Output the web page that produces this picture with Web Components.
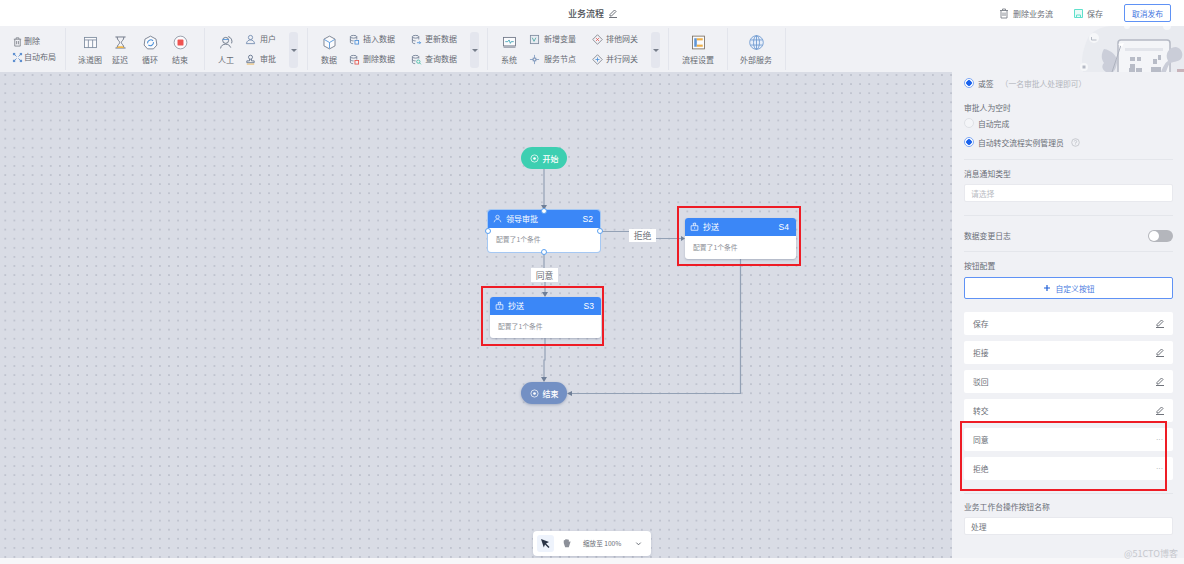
<!DOCTYPE html>
<html lang="zh"><head><meta charset="utf-8"><style>
html,body{margin:0;height:100%;overflow:hidden;background:#f7f7f9}
body{font-family:"Noto Sans CJK SC","Liberation Sans",sans-serif;font-size:8px;color:#62666e}
</style></head><body>
<wf-app></wf-app>
<script>
const ICONS={
trash:'<path d="M2 3.5h8M4.5 3.5V2h3v1.5M3 3.5V11h6V3.5M5 5.5V9M7 5.5V9" fill="none" stroke="#7c8088"/>',
layout:'<path d="M2 2l3 3M10 2L7 5M2 10l3-3M10 10L7 7" fill="none" stroke="#5e8fd0"/><rect x="1" y="1" width="2.5" height="2.5" fill="#5e8fd0"/><rect x="8.5" y="1" width="2.5" height="2.5" fill="#5e8fd0"/><rect x="1" y="8.5" width="2.5" height="2.5" fill="#5e8fd0"/><rect x="8.5" y="8.5" width="2.5" height="2.5" fill="#5e8fd0"/>',
user:'<circle cx="6" cy="3.8" r="2.3" fill="none" stroke="#6b85ad"/><path d="M1.5 10.5c.5-3 2.5-4 4.500-4s4 1 4.500 4z" fill="none" stroke="#6b85ad"/>',
stamp:'<circle cx="6" cy="3.5" r="2.200" fill="none" stroke="#5a6b85"/><path d="M5 5.500v2H2v2h8v-2H7v-2" fill="none" stroke="#5a6b85"/><path d="M2 11h8" stroke="#eeb048"/>',
dbadd:'<ellipse cx="5" cy="3" rx="3.5" ry="1.5" fill="none" stroke="#6b7a90"/><path d="M1.500 3v6c0 1 1.500 1.500 3 1.500M8.500 3v3M1.500 6c0 1 2 1.500 3.500 1.500" fill="none" stroke="#6b7a90"/><rect x="6.5" y="7" width="4" height="4" fill="none" stroke="#4a90d9"/>',
dbdel:'<ellipse cx="5" cy="3" rx="3.5" ry="1.5" fill="none" stroke="#6b7a90"/><path d="M1.500 3v6c0 1 1.500 1.500 3 1.500M8.500 3v3M1.500 6c0 1 2 1.500 3.500 1.500" fill="none" stroke="#6b7a90"/><rect x="6.5" y="7" width="4" height="4" fill="none" stroke="#e5534b"/>',
dbup:'<ellipse cx="5" cy="3" rx="3.5" ry="1.5" fill="none" stroke="#6b7a90"/><path d="M1.500 3v6c0 1 1.500 1.500 3 1.500M8.500 3v3M1.500 6c0 1 2 1.500 3.500 1.500" fill="none" stroke="#6b7a90"/><path d="M6.500 9.500h4M9 8l1.500 1.500L9 11" fill="none" stroke="#4a90d9"/>',
dbq:'<ellipse cx="5" cy="3" rx="3.5" ry="1.5" fill="none" stroke="#6b7a90"/><path d="M1.500 3v6c0 1 1.500 1.500 3 1.500M8.500 3v2M1.500 6c0 1 2 1.500 3.500 1.500" fill="none" stroke="#6b7a90"/><circle cx="8" cy="8.3" r="1.8" fill="none" stroke="#39b8a0"/><path d="M9.300 9.700l1.500 1.500" stroke="#39b8a0"/>',
vars:'<rect x="1.5" y="1.5" width="9" height="9" fill="#e8ebf1" stroke="#7c8a9e"/><path d="M3.500 4l2 4 2-4" fill="none" stroke="#46a6a0"/>',
svc:'<path d="M6 1v3.500M6 7.500V11M1 6h3.500M7.500 6H11" stroke="#7f9bc0"/><rect x="4.5" y="4.5" width="3" height="3" fill="none" stroke="#6b85ad"/>',
gwx:'<path d="M6 .8L11.200 6 6 11.200.8 6z" fill="none" stroke="#7c8088"/><path d="M4.500 4.500l3 3M7.500 4.500l-3 3" stroke="#e5534b"/>',
gwp:'<path d="M6 .8L11.200 6 6 11.200.8 6z" fill="none" stroke="#7c8088"/><path d="M6 3.800v4.400M3.800 6h4.400" stroke="#4a90d9"/>'
};
const BIG={
lane:'<rect x="3" y="4" width="14" height="12" fill="#fbfbfd" stroke="#7c8a9e"/><path d="M3 7h14M7.500 7v9M12.500 7v9" stroke="#7c8a9e" fill="none"/>',
delay:'<path d="M4 3.500h12M4 16.500h12M6 3.500c0 4 3 4.500 3 6.500s-3 2.500-3 6.500M14 3.500c0 4-3 4.500-3 6.500s3 2.500 3 6.500" fill="none" stroke="#6d7686" stroke-width="1.100"/><path d="M5.500 16.500l2-2h5l2 2z" fill="#f0b64a"/>',
loop:'<path d="M10 2.500l6.500 3.500 1 7-4 4.500h-7l-4-4.500 1-7z" fill="#fbfbfd" stroke="#6d7686"/><path d="M6.500 11a3.800 3.800 0 0 1 6.500-3M13.500 9.500a3.800 3.800 0 0 1-6 3.500" fill="none" stroke="#4a90d9" stroke-width="1.300"/>',
end:'<circle cx="10" cy="10" r="7.500" fill="#fbfbfd" stroke="#8c93a0"/><rect x="6.500" y="6.500" width="7" height="7" rx="1" fill="#ef5350"/>',
person:'<circle cx="9" cy="7.500" r="3.500" fill="none" stroke="#5f6b7e"/><path d="M3 17c.5-3.500 3-5 6-5s5 1.500 6 4" fill="none" stroke="#5f6b7e"/><path d="M12 3a6 6 0 0 1 4 8" fill="none" stroke="#5f6b7e"/><path d="M5.500 6.500h7" stroke="#4a90d9"/>',
cube:'<path d="M10 2.500l6.500 3.500v8L10 17.500 3.500 14V6z" fill="#fbfbfd" stroke="#6d7686"/><path d="M10 10l6-3.500M10 10v7M10 10L4 6.500" stroke="#4a90d9" fill="none"/>',
sys:'<rect x="3" y="4" width="14" height="10" fill="#fbfbfd" stroke="#6d7686"/><path d="M3 15.500h14" stroke="#6d7686"/><path d="M5 9h3l1.500-2 1.500 4 1-2h3" fill="none" stroke="#3fa3b5"/>',
settings:'<rect x="3" y="2.500" width="14" height="15" fill="#fbfbfd" stroke="#7a6f60"/><rect x="5" y="5" width="3" height="10" fill="#5e95d6"/><rect x="8" y="5" width="7" height="2.500" fill="#eeb048"/><rect x="8" y="12.500" width="7" height="2.500" fill="#eeb048"/>',
globe:'<circle cx="10" cy="10" r="8" fill="#e6eefa" stroke="#6b97cf"/><ellipse cx="10" cy="10" rx="3.500" ry="8" fill="none" stroke="#6b97cf"/><path d="M3 7h14M3 13h14M10 2v16" stroke="#6b97cf" fill="none"/>'
};
const PENCIL='<svg width="10" height="10" viewBox="0 0 10 10"><path d="M2 6.500L6.500 2 8 3.500 3.500 8H2zM1 9.500h8" fill="none" stroke="#6f737b" stroke-width="1"/></svg>';
function define(name,css,html){
  customElements.define(name,class extends HTMLElement{
    connectedCallback(){
      if(this.shadowRoot)return;
      const s=this.attachShadow({mode:'open'});
      s.innerHTML='<style>'+css+'</style>'+(typeof html==='function'?html(this):html);
    }
  });
}
define('wf-bigtool',`:host{display:flex;flex-direction:column;align-items:center;width:var(--w,30px);flex:none}
svg{width:17px;height:17px;display:block;margin-top:6px}
span{margin-top:3px;line-height:12px;white-space:nowrap}`,
el=>`<svg viewBox="0 0 20 20">${BIG[el.getAttribute('icon')]}</svg><span><slot></slot></span>`);
define('wf-smalltool',`:host{display:flex;align-items:center;gap:var(--g,3px);white-space:nowrap;height:12px;line-height:12px}
svg{width:11px;height:11px;flex:none}`,
el=>`<svg viewBox="0 0 12 12" stroke-width=".9">${ICONS[el.getAttribute('icon')]}</svg><slot></slot>`);
define('wf-toolgroup',`:host{display:flex;align-items:flex-start;box-sizing:border-box;border-right:1px solid #e3e5ec;height:42px;margin-top:2px;flex:none;width:var(--gw);padding-left:var(--pl,0)}`,
`<slot></slot>`);
define('wf-stack',`:host{display:flex;flex-direction:column;justify-content:space-between;height:32px;margin-top:5px;flex:none;margin-left:var(--ml,0);width:var(--w,auto)}`,`<slot></slot>`);
define('wf-more',`:host{display:flex;align-items:center;justify-content:center;width:9px;height:36px;margin-top:4px;background:#e4e6ee;border-radius:3px;flex:none}
i{border:3px solid transparent;border-top:3px solid #777e8b;border-bottom:0}`,`<i></i>`);
define('wf-header',`:host{display:flex;align-items:center;height:26px;background:#fff;flex:none}
.title{margin-left:568px;font-weight:500;font-size:9px;color:#4a4e55;display:flex;align-items:center;gap:4px;width:430px;flex:none}
.act{display:flex;align-items:center;gap:3px;color:#6a6e76;flex:none}
.btn{margin-left:21px;box-sizing:border-box;width:47px;height:18px;border:1px solid #5f92f5;border-radius:2px;color:#3f74e0;display:flex;align-items:center;justify-content:center;font-size:7.800px;flex:none}`,
`<div class="title">业务流程 ${PENCIL}</div>
<div class="act"><svg width="12" height="12" viewBox="0 0 12 12" stroke-width=".9">${ICONS.trash}</svg>删除业务流</div>
<div class="act" style="margin-left:20px"><svg width="11" height="11" viewBox="0 0 11 11"><path d="M1.500 1.500h8v8h-8zM3.500 9.500V7h4v2.500" fill="#eafbf7" stroke="#5fe0cb"/></svg>保存</div>
<div class="btn">取消发布</div>`);
define('wf-toolbar',`:host{display:flex;height:46px;background:#f0f1f5;position:relative;flex:none;overflow:hidden;font-size:8px;color:#676b73}
svg.art{position:absolute;right:0;top:0}`,
`<slot></slot><svg class="art" width="105" height="46" viewBox="0 0 105 46">
<path d="M4 46C1 32 5 22 8 14c3-8 14-14 26-14h71v46z" fill="#e9ebf0"/>
<circle cx="48" cy="0" r="3" fill="#f6f7f9"/><circle cx="88" cy="0" r="4" fill="#f6f7f9"/>
<circle cx="15" cy="12" r="5" fill="#f6f7f9"/><path d="M12.500 11v3h5" stroke="#b5bac5" fill="none"/>
<circle cx="5" cy="41" r="4" fill="#f6f7f9"/><rect x="3.500" y="39.500" width="3" height="3" fill="#b5bac5"/>
<path d="M39 46V17a3 3 0 0 1 3-3h46a3 3 0 0 1 3 3v29" fill="#f4f5f8" stroke="#b5b9c4" stroke-width="1.500"/>
<path d="M46 22h38v3H46z" fill="#e3e5eb"/>
<path d="M51 31h5v4h-5zM58 31h4v4h-4zM51 38h5v4h-5zM57 42h6v4h-6zM50 42h6v4h-6zM74 33h4v5h-4zM79 29h3v5h-3zM72 41h10v5H72z" fill="#b8bcc7"/>
<path d="M27 46c-5-3-4-7-2-9-3-4-3-9 0-14 7 1 14 7 13 14-1 4-1 6-4 9z" fill="#cbced9"/>
<path d="M82 46c3-7 4-9 7-11-4-8 2-14 8-14 6 1 8 8 5 12-3 3-9 3-11 4-2 3-3 6-4 9z" fill="#cacdd8"/>
<path d="M33 46l9-27" stroke="#aeb3bf"/><path d="M39 18l4 3 2-4z" fill="#fff"/>
<path d="M98 43h7v3h-7z" fill="#c9b3ba"/>
</svg>`);
define('wf-canvas',`:host{display:block;position:relative;flex:1;min-width:0;background-color:#d9dce5;
background-image:radial-gradient(circle at center,#bcc0cc .6px,transparent .95px);background-size:9.100px 9.100px;background-position:.75px -1.550px;overflow:hidden}`,`<slot></slot>`);
define('wf-pill',`:host{position:absolute;display:flex;align-items:center;justify-content:center;gap:4px;width:46px;height:22px;border-radius:11px;color:#fff;font-size:8px;font-weight:500;background:var(--bg);box-shadow:var(--sh,none)}
svg{width:9px;height:9px}`,
`<svg viewBox="0 0 10 10"><circle cx="5" cy="5" r="4" fill="none" stroke="#fff" stroke-width=".8"/><circle cx="5" cy="5" r="1.500" fill="#fff"/></svg><slot></slot>`);
define('wf-node',`:host{position:absolute;display:block;width:111px;height:41px;background:#fff;border-radius:3px;box-shadow:0 1px 2px rgba(90,100,130,.35);box-sizing:border-box}
:host([selected]){width:112px;height:42px;box-shadow:0 0 0 1px #a5c8f3}
.h{height:17.500px;background:#3b87f7;border-radius:3px 3px 0 0;color:#fff;display:flex;align-items:center;padding:0 7px 0 5px;font-size:8px;gap:4px}
.h svg{width:9px;height:9px}
.h b{margin-left:auto;font-weight:400;font-family:"Liberation Sans",sans-serif;font-size:8.500px}
.b{padding:5px 8px;font-size:6.800px;color:#8d9097;line-height:12px}
.p{position:absolute;width:6px;height:6px;border-radius:50%;background:#fff;border:1px solid #5aa0f0;box-sizing:border-box}`,
el=>`<div class="h">${el.getAttribute('kind')==='user'
 ?'<svg viewBox="0 0 12 12"><circle cx="6" cy="4" r="2.300" fill="none" stroke="#fff" stroke-width=".9"/><path d="M1.500 11c.5-3 2.500-4 4.500-4s4 1 4.500 4" fill="none" stroke="#fff" stroke-width=".9"/></svg>'
 :'<svg viewBox="0 0 12 12"><path d="M1.500 5h9v6h-9zM5 5V1.500h2.500V5M5 2.500H3.500M6.200 7v2" fill="none" stroke="#fff" stroke-width="1"/></svg>'}
<span><slot></slot></span><b>${el.getAttribute('tag')}</b></div><div class="b">配置了1个条件</div>
${el.hasAttribute('selected')?'<i class="p" style="left:-3px;top:18px"></i><i class="p" style="right:-3px;top:18px"></i><i class="p" style="left:53px;top:-2px"></i><i class="p" style="left:53px;bottom:-3px"></i>':''}`);
define('wf-edge-label',`:host{position:absolute;display:flex;align-items:center;justify-content:center;background:#fff;color:#6b7078;font-size:8.800px;width:27px;height:14px}`,`<slot></slot>`);
define('wf-redbox',`:host{position:absolute;box-sizing:border-box;border:2.500px solid #ee1c25;pointer-events:none;display:block}`,``);
define('wf-zoombar',`:host{position:absolute;display:flex;align-items:center;left:533px;top:459px;width:118px;height:24.500px;background:#fff;border-radius:4px;box-shadow:0 1px 3px rgba(90,100,130,.2);font-size:6.600px;color:#6a6e76}
.a{width:17px;height:17px;margin-left:4px;background:#eef3fc;border-radius:3px;display:flex;align-items:center;justify-content:center}
.h{margin-left:7px}
.t{margin-left:11px;white-space:nowrap}
.c{margin-left:auto;margin-right:9px}`,
`<div class="a"><svg width="11" height="11" viewBox="0 0 11 11"><path d="M1 1l8 3-3 1.500 3.500 3.500-1 1L5 6.500 3.800 9.500z" fill="#2a3446"/></svg></div>
<svg class="h" width="11" height="12" viewBox="0 0 12 12"><path d="M3 6V3.500a.7.7 0 0 1 1.400 0V2.500a.7.7 0 0 1 1.400 0v-.3a.7.7 0 0 1 1.400 0v.8a.7.7 0 0 1 1.400 0V5l.9-.7c.6-.3 1 .2.800.7L8.500 10.500h-4z" fill="#8c9099"/></svg>
<span class="t">缩放至 100%</span>
<svg class="c" width="7" height="7" viewBox="0 0 8 8"><path d="M1.500 3L4 5.500 6.500 3" fill="none" stroke="#555a63"/></svg>`);
define('wf-radio',`:host{display:flex;align-items:center;gap:4px;height:14px;white-space:nowrap;color:#6a6e76}
i{width:10px;height:10px;box-sizing:border-box;border-radius:50%;border:1px solid #dfe1e6;background:#f4f5f8;flex:none}
:host([on]) i{border:1px solid #7ea8f5;background:radial-gradient(circle,#1a62ec 2.500px,#fff 3px)}`,`<i></i><slot></slot>`);
define('wf-label',`:host{display:block;color:#696d75;height:14px;line-height:14px;white-space:nowrap}`,`<slot></slot>`);
define('wf-divider',`:host{display:block;height:1px;background:#e4e6eb;flex:none}`,``);
define('wf-input',`:host{display:flex;align-items:center;box-sizing:border-box;height:18px;background:#fff;border:1px solid #e8e9ee;border-radius:2px;padding:0 6px;color:#70747b;flex:none}
:host([ph]){color:#b9bcc3}`,`<slot></slot>`);
define('wf-btn-row',`:host{display:flex;align-items:center;justify-content:space-between;box-sizing:border-box;height:23px;background:#fff;border-radius:2px;padding:0 8px 1px 9px;color:#6a6e76;flex:none}
.d{font-family:"Liberation Sans",sans-serif;color:#9a9da4;font-size:7px;line-height:9px;margin-right:2px}`,
el=>`<span><slot></slot></span>${el.getAttribute('act')==='more'?'<span class="d">···</span>':PENCIL}`);
define('wf-panel',`:host{display:flex;flex-direction:column;flex:none;box-sizing:border-box;width:232px;background:#f0f1f5;padding:4px 11px 0 12px;position:relative;overflow:hidden;font-size:7.800px}`,`<slot></slot>`);
define('wf-toggle',`:host{display:block;position:relative;width:25px;height:12px;background:#b4b6bc;border-radius:6px;flex:none}
i{position:absolute;left:1px;top:1px;width:10px;height:10px;background:#fff;border-radius:50%}`,`<i></i>`);
define('wf-addbtn',`:host{display:flex;align-items:center;justify-content:center;gap:5px;height:22px;box-sizing:border-box;background:#fff;border:1px solid #5f92f5;border-radius:2px;color:#4a7be0;flex:none}
svg{width:8px;height:8px}`,`<svg viewBox="0 0 8 8"><path d="M4 1v6M1 4h6" stroke="#1f5fd8" stroke-width="1.200"/></svg><slot></slot>`);
define('wf-mark',`:host{position:absolute;left:1124px;top:547px;color:#c6c8cd;font-size:9px;line-height:14px;white-space:nowrap}`,`<slot></slot>`);
define('wf-app',`:host{display:flex;flex-direction:column;width:1184px;height:564px}
.m{display:flex;height:486px;flex:none}`,
`<wf-header></wf-header>
<wf-toolbar>
<wf-toolgroup style="--gw:66px;--pl:12px"><wf-stack style="height:28px;margin-top:7px">
<wf-smalltool icon="trash" style="--g:1px">删除</wf-smalltool><wf-smalltool icon="layout" style="--g:1px">自动布局</wf-smalltool></wf-stack></wf-toolgroup>
<wf-toolgroup style="--gw:139px;--pl:9px">
<wf-bigtool icon="lane">泳道图</wf-bigtool><wf-bigtool icon="delay">延迟</wf-bigtool><wf-bigtool icon="loop">循环</wf-bigtool><wf-bigtool icon="end">结束</wf-bigtool></wf-toolgroup>
<wf-toolgroup style="--gw:103px;--pl:6px"><wf-bigtool icon="person">人工</wf-bigtool>
<wf-stack style="--ml:4px;--w:44px"><wf-smalltool icon="user" style="--g:4px">用户</wf-smalltool><wf-smalltool icon="stamp" style="--g:4px">审批</wf-smalltool></wf-stack><wf-more></wf-more></wf-toolgroup>
<wf-toolgroup style="--gw:180px;--pl:6px"><wf-bigtool icon="cube">数据</wf-bigtool>
<wf-stack style="--ml:5px;--w:62px"><wf-smalltool icon="dbadd">插入数据</wf-smalltool><wf-smalltool icon="dbdel">删除数据</wf-smalltool></wf-stack>
<wf-stack style="--w:59px"><wf-smalltool icon="dbup">更新数据</wf-smalltool><wf-smalltool icon="dbq">查询数据</wf-smalltool></wf-stack><wf-more></wf-more></wf-toolgroup>
<wf-toolgroup style="--gw:181px;--pl:6px"><wf-bigtool icon="sys">系统</wf-bigtool>
<wf-stack style="--ml:5px;--w:63px"><wf-smalltool icon="vars" style="--g:4px">新增变量</wf-smalltool><wf-smalltool icon="svc" style="--g:4px">服务节点</wf-smalltool></wf-stack>
<wf-stack style="--w:59px"><wf-smalltool icon="gwx">排他网关</wf-smalltool><wf-smalltool icon="gwp">并行网关</wf-smalltool></wf-stack><wf-more></wf-more></wf-toolgroup>
<wf-toolgroup style="--gw:59px;--pl:7px"><wf-bigtool icon="settings" style="--w:44px">流程设置</wf-bigtool></wf-toolgroup>
<wf-toolgroup style="--gw:58px;--pl:6px"><wf-bigtool icon="globe" style="--w:44px">外部服务</wf-bigtool></wf-toolgroup>
</wf-toolbar>
<div class="m">
<wf-canvas>
<svg style="position:absolute;left:0;top:0" width="952" height="486" viewBox="0 72 952 486" fill="none" stroke="#93a1b5" stroke-width="1.200">
<path d="M544 168V206M600 231.500H630M655 238.500H681M544 252V268M545 281V293M545 337V360H544V378M740.500 259V393.500H571"/>
<g fill="#6f7f98" stroke="none"><path d="M541 205h6l-3 5zM681 236l4 2.500-4 2.500zM542 292h6l-3 5zM541 377h6l-3 5zM567 393.500l5-2.500v5z"/></g>
</svg>
<wf-pill style="left:521px;top:75px;--bg:#3dcfb1">开始</wf-pill>
<wf-pill style="left:521px;top:310px;--bg:#7390c4;--sh:0 1px 3px rgba(80,100,140,.4)">结束</wf-pill>
<wf-node selected kind="user" tag="S2" style="left:488px;top:138px">领导审批</wf-node>
<wf-node kind="cc" tag="S4" style="left:685px;top:146px">抄送</wf-node>
<wf-node kind="cc" tag="S3" style="left:490px;top:225px">抄送</wf-node>
<wf-edge-label style="left:629px;top:157px;height:13px">拒绝</wf-edge-label>
<wf-edge-label style="left:531px;top:196px">同意</wf-edge-label>
<wf-redbox style="left:677px;top:134px;width:124px;height:60px"></wf-redbox>
<wf-redbox style="left:481px;top:214px;width:123px;height:60px"></wf-redbox>
<wf-zoombar></wf-zoombar>
</wf-canvas>
<wf-panel>
<wf-radio on>或签<span style="color:#b3b6bd;margin-left:3px">（一名审批人处理即可）</span></wf-radio>
<wf-label style="margin-top:11px">审批人为空时</wf-label>
<wf-radio style="margin-top:1px">自动完成</wf-radio>
<wf-radio on style="margin-top:5px">自动转交流程实例管理员<svg width="9" height="9" viewBox="0 0 9 9" style="margin-left:3px"><circle cx="4.500" cy="4.500" r="3.800" fill="none" stroke="#b8bbc2" stroke-width=".7"/><path d="M3.300 3.500a1.200 1.200 0 1 1 1.200 1.300v.8M4.500 6.500v.6" fill="none" stroke="#b8bbc2" stroke-width=".7"/></svg></wf-radio>
<wf-divider style="margin-top:10px"></wf-divider>
<wf-label style="margin-top:7px">消息通知类型</wf-label>
<wf-input ph style="margin-top:3px">请选择</wf-input>
<wf-divider style="margin-top:13px"></wf-divider>
<div style="display:flex;justify-content:space-between;align-items:center;margin-top:13px;height:13px;flex:none"><wf-label>数据变更日志</wf-label><wf-toggle></wf-toggle></div>
<wf-divider style="margin-top:9px"></wf-divider>
<wf-label style="margin-top:7px">按钮配置</wf-label>
<wf-addbtn style="margin-top:4px">自定义按钮</wf-addbtn>
<wf-btn-row style="margin-top:13px">保存</wf-btn-row>
<wf-btn-row style="margin-top:6px">拒接</wf-btn-row>
<wf-btn-row style="margin-top:6px">驳回</wf-btn-row>
<wf-btn-row style="margin-top:6px">转交</wf-btn-row>
<wf-btn-row act="more" style="margin-top:6px">同意</wf-btn-row>
<wf-btn-row act="more" style="margin-top:6px">拒绝</wf-btn-row>
<wf-divider style="margin-top:13px"></wf-divider>
<wf-label style="margin-top:6px">业务工作台操作按钮名称</wf-label>
<wf-input style="margin-top:3px">处理</wf-input>
<wf-redbox style="left:7.500px;top:349px;width:207.500px;height:70px"></wf-redbox>
</wf-panel>
</div>
<wf-mark>@51CTO博客</wf-mark>`);
</script>
</body></html>
